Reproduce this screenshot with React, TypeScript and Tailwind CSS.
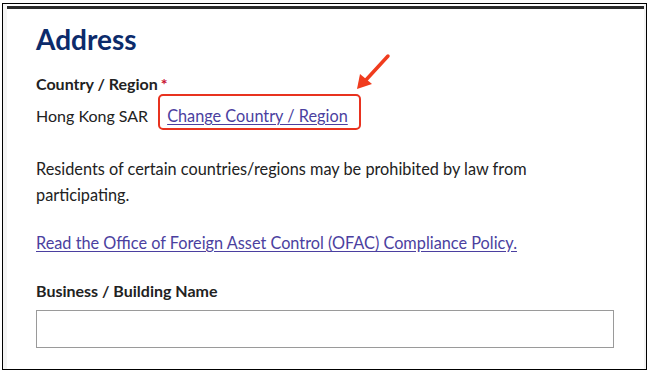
export default function App() {
  return (
    <div className="relative w-[651px] h-[374px] bg-white pt-[3px] pl-[2px] font-['Lato','Liberation_Sans',sans-serif] text-[#222]">
      <div className="flex w-[645px] h-[367px] border border-black">
        <div className="w-[4px] bg-[#f4f4f4]" />
        <main className="flex-1 bg-white pt-[2px]">
          <div className="h-[3px] bg-[#2b2b2b]" />
          <div className="pl-[29px] pt-[13px]">
            <h1 className="text-[28px] leading-[34px] font-bold text-[#0c2b6b]">Address</h1>

            <p className="mt-[16px] text-[16px] leading-[24px] font-bold">
              Country / Region<span className="ml-[3px] text-[#c8102e]">*</span>
            </p>

            <div className="mt-[8px] flex text-[16px] leading-[24px]">
              <span>Hong Kong SAR</span>
              <span className="relative ml-[19px]">
                <a href="#" className="text-[16.3px] text-[#4b3fa0] underline underline-offset-2">
                  Change Country / Region
                </a>
                <span className="absolute -left-[9px] -right-[13px] -top-[10px] -bottom-[2px] rounded-[5px] border-2 border-[#e8321f]" />
              </span>
            </div>

            <p className="mt-[28px] w-[530px] text-[16.3px] leading-[25.5px]">
              Residents of certain countries/regions may be prohibited by law from participating.
            </p>

            <a href="#" className="mt-[24px] block w-fit text-[16.3px] leading-[24px] text-[#4b3fa0] underline underline-offset-2">
              Read the Office of Foreign Asset Control (OFAC) Compliance Policy.
            </a>

            <label htmlFor="business" className="mt-[24px] block text-[16px] leading-[24px] font-bold">
              Business / Building Name
            </label>
            <input
              id="business"
              type="text"
              className="mt-[7px] block w-[578px] h-[38px] border border-[#9a9a9a] bg-white"
            />
          </div>
        </main>
        <div className="w-[2px] bg-[#f4f4f4]" />
      </div>

      <svg className="absolute left-[350px] top-[50px]" width="45" height="45" viewBox="0 0 45 45">
        <line x1="38" y1="6" x2="15" y2="31" stroke="#f03c1e" strokeWidth="3.5" strokeLinecap="round" />
        <polygon points="7,39 10,24 22,34" fill="#f03c1e" />
      </svg>
    </div>
  )
}
